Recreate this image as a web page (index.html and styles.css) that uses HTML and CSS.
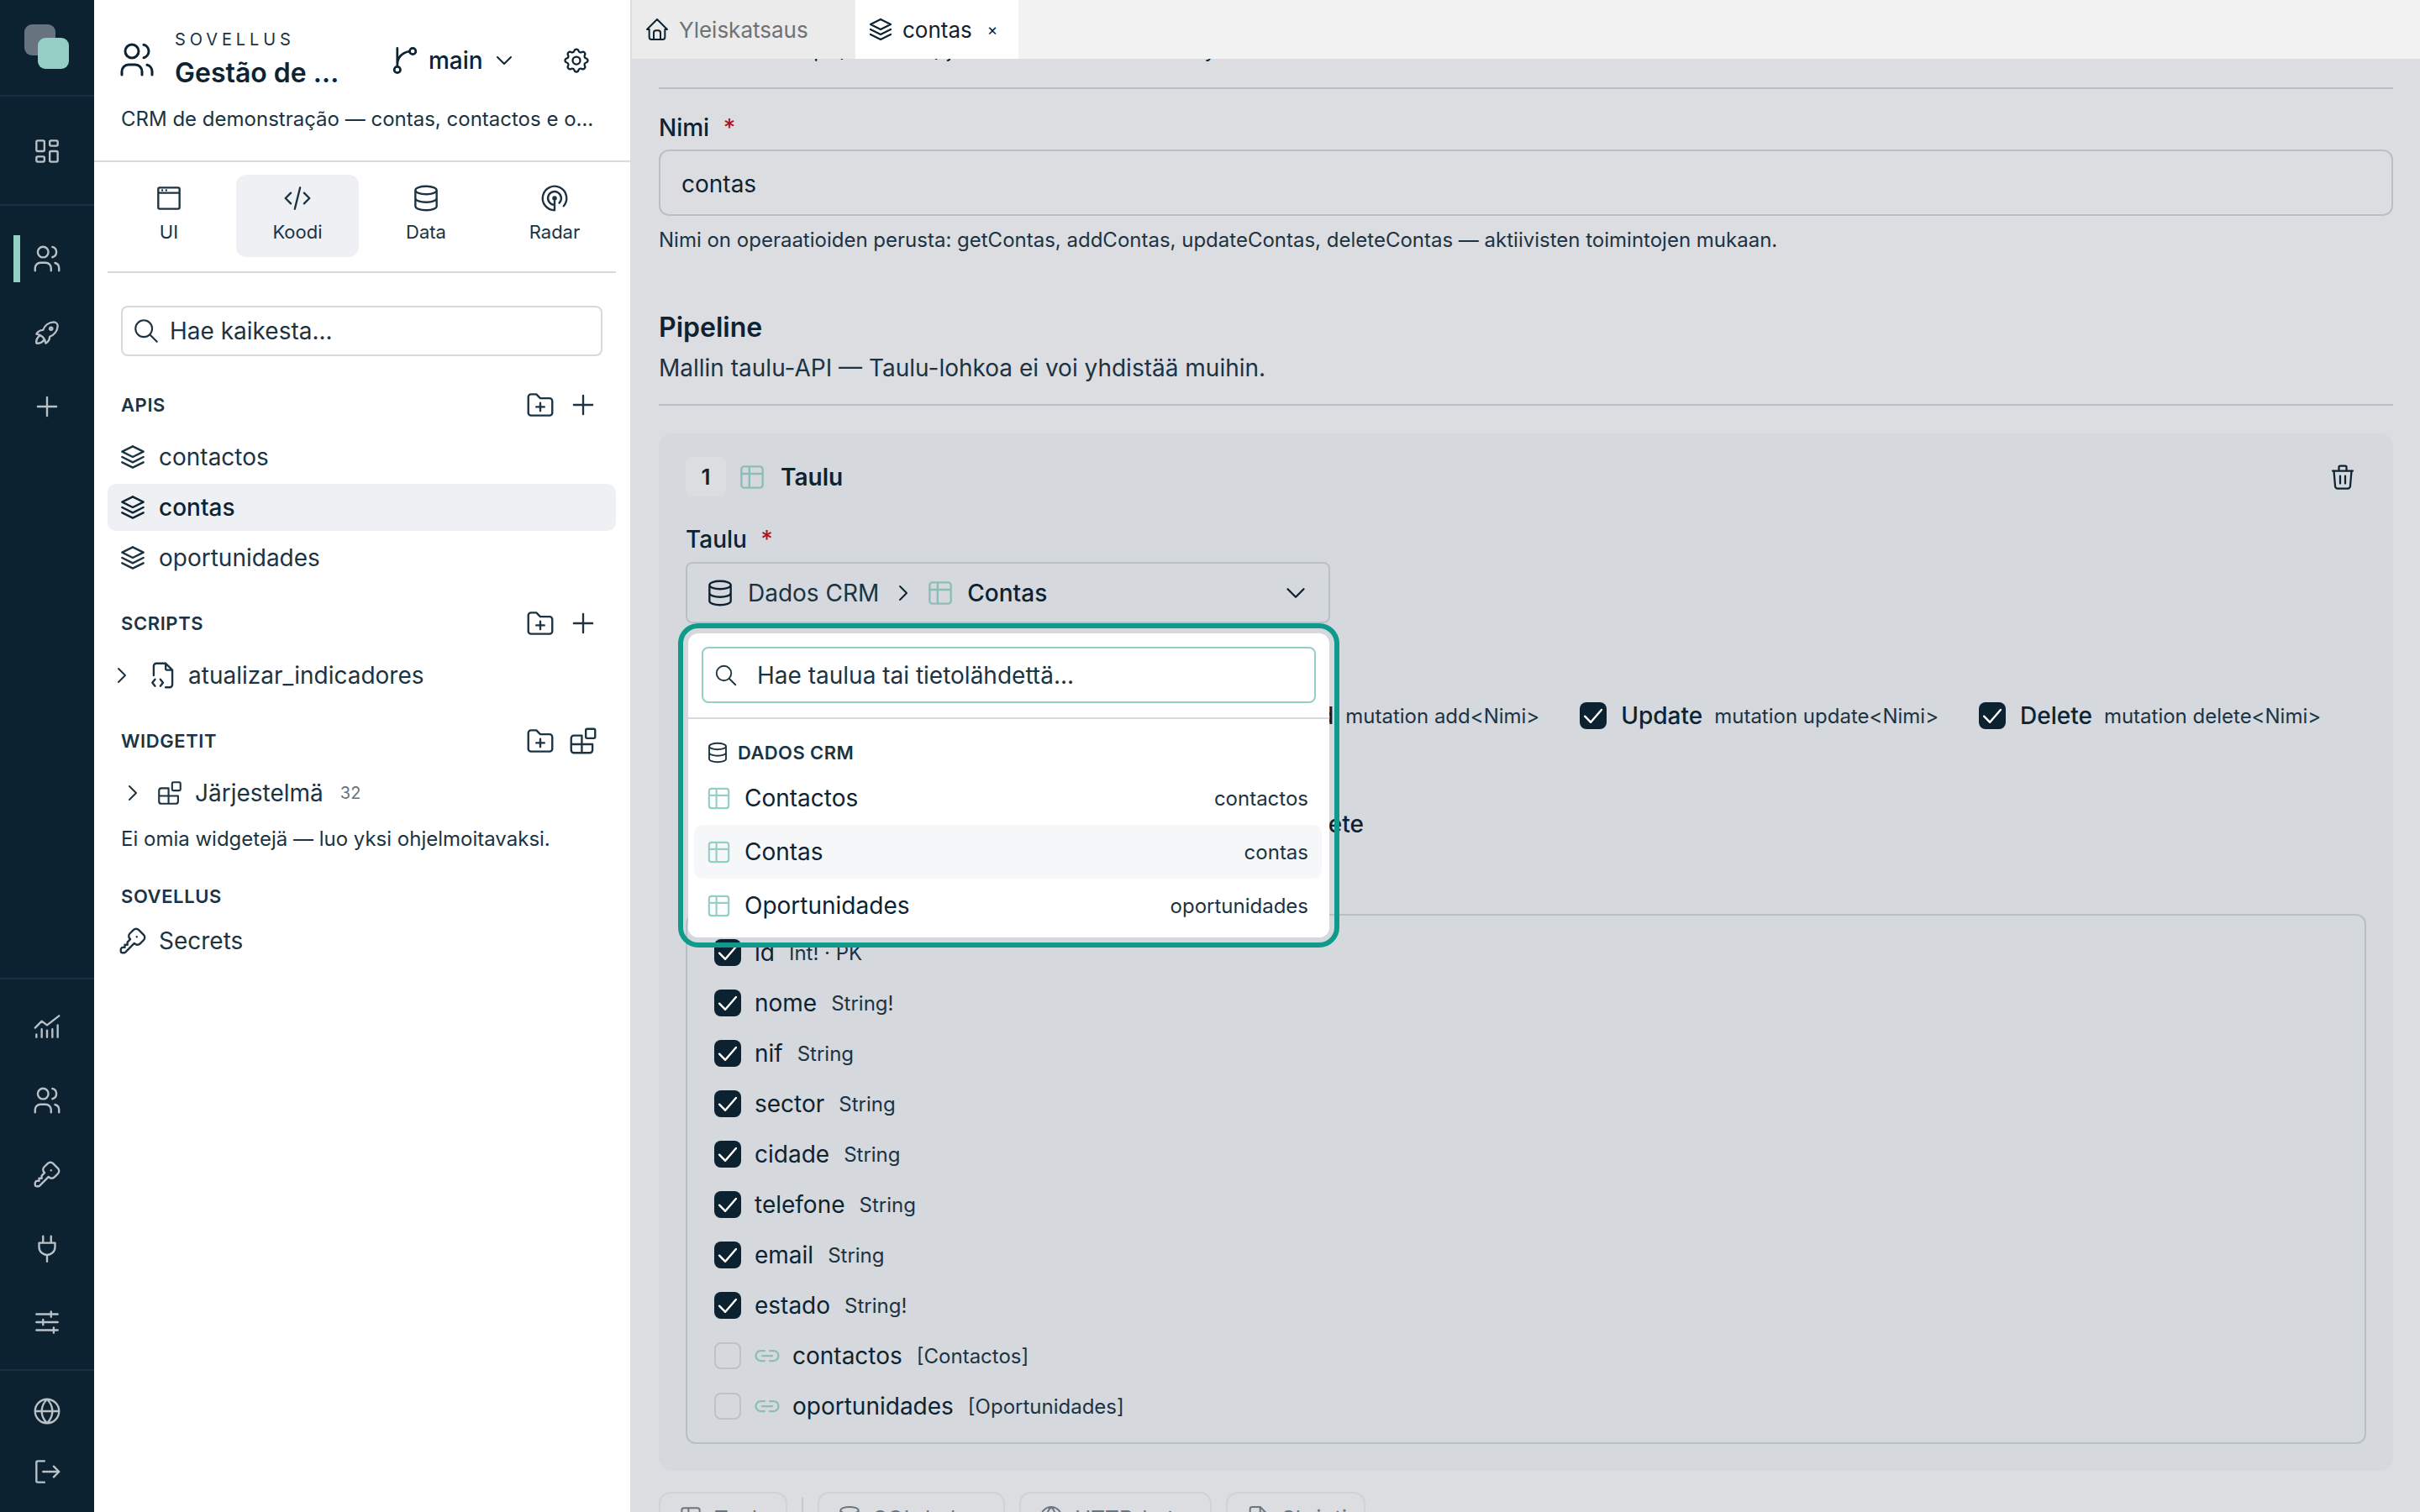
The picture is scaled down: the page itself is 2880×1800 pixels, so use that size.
FILE: index.html
```html
<!DOCTYPE html>
<html lang="fi">
<head>
    <meta charset="UTF-8">
    <title>Gestão de Clientes | contas</title>
    <link rel="stylesheet" href="styles.css">
</head>
<body>
    <svg class="sprite" xmlns="http://www.w3.org/2000/svg">
        <symbol id="i-dashboard" viewBox="0 0 24 24"><path d="M5 4h4a1 1 0 0 1 1 1v6a1 1 0 0 1-1 1H5a1 1 0 0 1-1-1V5a1 1 0 0 1 1-1M5 16h4a1 1 0 0 1 1 1v2a1 1 0 0 1-1 1H5a1 1 0 0 1-1-1v-2a1 1 0 0 1 1-1M15 12h4a1 1 0 0 1 1 1v6a1 1 0 0 1-1 1h-4a1 1 0 0 1-1-1v-6a1 1 0 0 1 1-1M15 4h4a1 1 0 0 1 1 1v2a1 1 0 0 1-1 1h-4a1 1 0 0 1-1-1V5a1 1 0 0 1 1-1"/></symbol>
        <symbol id="i-users" viewBox="0 0 24 24"><path d="M5 7a4 4 0 1 0 8 0a4 4 0 1 0-8 0M3 21v-2a4 4 0 0 1 4-4h4a4 4 0 0 1 4 4v2M16 3.13a4 4 0 0 1 0 7.75M21 21v-2a4 4 0 0 0-3-3.85"/></symbol>
        <symbol id="i-rocket" viewBox="0 0 24 24"><path d="M4 13a8 8 0 0 1 7 7a6 6 0 0 0 3-5a9 9 0 0 0 6-8a3 3 0 0 0-3-3a9 9 0 0 0-8 6a6 6 0 0 0-5 3M7 14a6 6 0 0 0-3 6a6 6 0 0 0 6-3M14 9a1 1 0 1 0 2 0a1 1 0 1 0-2 0"/></symbol>
        <symbol id="i-plus" viewBox="0 0 24 24"><path d="M12 5v14M5 12h14"/></symbol>
        <symbol id="i-chart" viewBox="0 0 24 24"><path d="M3 13l5-5 4 3 9-7M4 20v-2M8 20v-6M12 20v-5M16 20v-6M20 20v-9"/></symbol>
        <symbol id="i-key" viewBox="0 0 24 24"><path d="M16.555 3.843l3.602 3.602a2.877 2.877 0 0 1 0 4.069l-2.643 2.643a2.877 2.877 0 0 1-4.069 0l-.301-.301l-6.558 6.558a2 2 0 0 1-1.239.578l-.175.008h-1.172a1 1 0 0 1-.993-.883l-.007-.117v-1.172a2 2 0 0 1 .467-1.284l.119-.13l.414-.414h2v-2h2v-2l2.144-2.144l-.301-.301a2.877 2.877 0 0 1 0-4.069l2.643-2.643a2.877 2.877 0 0 1 4.069 0M15 9h.01"/></symbol>
        <symbol id="i-plug" viewBox="0 0 24 24"><path d="M9 3v5M15 3v5M6 8h12v3a6 6 0 0 1-12 0zM12 17v5"/></symbol>
        <symbol id="i-sliders" viewBox="0 0 24 24"><path d="M4 6h16M15 4v4M4 12h16M9 10v4M4 18h16M17 16v4"/></symbol>
        <symbol id="i-world" viewBox="0 0 24 24"><path d="M3 12a9 9 0 1 0 18 0a9 9 0 1 0-18 0M3 12h18M12 3c-3 3-4 6-4 9s1 6 4 9c3-3 4-6 4-9s-1-6-4-9"/></symbol>
        <symbol id="i-logout" viewBox="0 0 24 24"><path d="M10 4H5a1 1 0 0 0-1 1v14a1 1 0 0 0 1 1h5M9 12h12M17 8l4 4-4 4"/></symbol>
        <symbol id="i-branch" viewBox="0 0 24 24"><path d="M5 18a2 2 0 1 0 4 0a2 2 0 1 0-4 0M15 6a2 2 0 1 0 4 0a2 2 0 1 0-4 0M7 16V4M7 15c0-5 3-8 8-9"/></symbol>
        <symbol id="i-chevron-down" viewBox="0 0 24 24"><path d="M6 9l6 6 6-6"/></symbol>
        <symbol id="i-chevron-right" viewBox="0 0 24 24"><path d="M9 6l6 6-6 6"/></symbol>
        <symbol id="i-settings" viewBox="0 0 24 24"><path d="M10.325 4.317c.426-1.756 2.924-1.756 3.35 0a1.724 1.724 0 0 0 2.573 1.066c1.543-.94 3.31.826 2.37 2.37a1.724 1.724 0 0 0 1.065 2.572c1.756.426 1.756 2.924 0 3.35a1.724 1.724 0 0 0-1.066 2.573c.94 1.543-.826 3.31-2.37 2.37a1.724 1.724 0 0 0-2.572 1.065c-.426 1.756-2.924 1.756-3.35 0a1.724 1.724 0 0 0-2.573-1.066c-1.543.94-3.31-.826-2.37-2.37a1.724 1.724 0 0 0-1.065-2.572c-1.756-.426-1.756-2.924 0-3.35a1.724 1.724 0 0 0 1.066-2.573c-.94-1.543.826-3.31 2.37-2.37c1 .608 2.296.07 2.572-1.065zM9 12a3 3 0 1 0 6 0a3 3 0 0 0-6 0"/></symbol>
        <symbol id="i-browser" viewBox="0 0 24 24"><path d="M5 4h14a1 1 0 0 1 1 1v14a1 1 0 0 1-1 1H5a1 1 0 0 1-1-1V5a1 1 0 0 1 1-1M4 8h16M7 6h.01M10 6h.01"/></symbol>
        <symbol id="i-code" viewBox="0 0 24 24"><path d="M7 8l-4 4 4 4M17 8l4 4-4 4M14 4l-4 16"/></symbol>
        <symbol id="i-database" viewBox="0 0 24 24"><path d="M4 6a8 3 0 1 0 16 0a8 3 0 1 0-16 0M4 6v6a8 3 0 0 0 16 0V6M4 12v6a8 3 0 0 0 16 0v-6"/></symbol>
        <symbol id="i-radar" viewBox="0 0 24 24"><path d="M11 12a1 1 0 1 0 2 0a1 1 0 1 0-2 0M15.51 15.56a5 5 0 1 0-3.51 1.44M18.832 17.86a9 9 0 1 0-6.832 3.14M12 12v9"/></symbol>
        <symbol id="i-search" viewBox="0 0 24 24"><path d="M3 10a7 7 0 1 0 14 0a7 7 0 1 0-14 0M21 21l-6-6"/></symbol>
        <symbol id="i-folder-plus" viewBox="0 0 24 24"><path d="M12 20H5a2 2 0 0 1-2-2V6a2 2 0 0 1 2-2h4l3 3h7a2 2 0 0 1 2 2v9a2 2 0 0 1-2 2zM12 10.500v6M9 13.500h6"/></symbol>
        <symbol id="i-stack" viewBox="0 0 24 24"><path d="M12 4L4 8l8 4 8-4-8-4M4 12l8 4 8-4M4 16l8 4 8-4"/></symbol>
        <symbol id="i-file-code" viewBox="0 0 24 24"><path d="M14 3v4a1 1 0 0 0 1 1h4M5 12V5a2 2 0 0 1 2-2h7l5 5v11a2 2 0 0 1-2 2h-3M6 15l-2 2.500 2 2.500M10 15l2 2.500-2 2.500"/></symbol>
        <symbol id="i-widgets" viewBox="0 0 24 24"><path d="M5 8h6v13H5a2 2 0 0 1-2-2v-9a2 2 0 0 1 2-2M3 14.500h16M11 14.500V21h6a2 2 0 0 0 2-2v-4.500M15 3h5a1 1 0 0 1 1 1v5a1 1 0 0 1-1 1h-5a1 1 0 0 1-1-1V4a1 1 0 0 1 1-1"/></symbol>
        <symbol id="i-home" viewBox="0 0 24 24"><path d="M5 12H3l9-9 9 9h-2M5 12v7a2 2 0 0 0 2 2h10a2 2 0 0 0 2-2v-7M9 21v-6a2 2 0 0 1 2-2h2a2 2 0 0 1 2 2v6"/></symbol>
        <symbol id="i-table" viewBox="0 0 24 24"><path d="M6 4h12a2 2 0 0 1 2 2v12a2 2 0 0 1-2 2H6a2 2 0 0 1-2-2V6a2 2 0 0 1 2-2M4 9.500h16M10 4v16"/></symbol>
        <symbol id="i-link" viewBox="0 0 24 24"><path d="M8 12h8M10 8H7a4 4 0 0 0 0 8h3M14 8h3a4 4 0 0 1 0 8h-3"/></symbol>
        <symbol id="i-trash" viewBox="0 0 24 24"><path d="M4 7h16M10 11v6M14 11v6M5 7l1 12a2 2 0 0 0 2 2h8a2 2 0 0 0 2-2l1-12M9 7V4a1 1 0 0 1 1-1h4a1 1 0 0 1 1 1v3"/></symbol>
        <symbol id="i-check" viewBox="0 0 24 24"><path d="M5 12.500l5 5L19 7"/></symbol>
    </svg>

    <div class="app">
        <nav class="rail">
            <div class="rail-logo"><span class="logo-back"></span><span class="logo-front"></span></div>
            <div class="rail-group rail-home">
                <a class="rail-item"><svg class="icon"><use href="#i-dashboard"/></svg></a>
            </div>
            <div class="rail-group rail-apps">
                <a class="rail-item active"><svg class="icon"><use href="#i-users"/></svg></a>
                <a class="rail-item"><svg class="icon"><use href="#i-rocket"/></svg></a>
                <a class="rail-item"><svg class="icon"><use href="#i-plus"/></svg></a>
            </div>
            <div class="rail-group rail-admin">
                <a class="rail-item"><svg class="icon"><use href="#i-chart"/></svg></a>
                <a class="rail-item"><svg class="icon"><use href="#i-users"/></svg></a>
                <a class="rail-item"><svg class="icon"><use href="#i-key"/></svg></a>
                <a class="rail-item"><svg class="icon"><use href="#i-plug"/></svg></a>
                <a class="rail-item"><svg class="icon"><use href="#i-sliders"/></svg></a>
            </div>
            <div class="rail-group rail-bottom">
                <a class="rail-item"><svg class="icon"><use href="#i-world"/></svg></a>
                <a class="rail-item"><svg class="icon"><use href="#i-logout"/></svg></a>
            </div>
        </nav>

        <aside class="panel">
            <header class="panel-head">
                <div class="app-row">
                    <svg class="icon app-icon"><use href="#i-users"/></svg>
                    <div class="app-titles">
                        <div class="app-kicker">SOVELLUS</div>
                        <div class="app-name">Gestão de Clientes</div>
                    </div>
                    <div class="branch">
                        <svg class="icon branch-icon"><use href="#i-branch"/></svg>
                        <span>main</span>
                        <svg class="icon branch-chevron"><use href="#i-chevron-down"/></svg>
                    </div>
                    <svg class="icon gear"><use href="#i-settings"/></svg>
                </div>
                <p class="app-desc">CRM de demonstração — contas, contactos e oportunidades</p>
            </header>

            <div class="modes">
                <div class="mode"><svg class="icon"><use href="#i-browser"/></svg>UI</div>
                <div class="mode active"><svg class="icon"><use href="#i-code"/></svg>Koodi</div>
                <div class="mode"><svg class="icon"><use href="#i-database"/></svg>Data</div>
                <div class="mode"><svg class="icon"><use href="#i-radar"/></svg>Radar</div>
            </div>

            <div class="panel-search">
                <svg class="icon"><use href="#i-search"/></svg>
                <span>Hae kaikesta...</span>
            </div>

            <section class="tree-section">
                <div class="section-head">
                    <span>APIS</span>
                    <div class="section-actions">
                        <svg class="icon"><use href="#i-folder-plus"/></svg>
                        <svg class="icon"><use href="#i-plus"/></svg>
                    </div>
                </div>
                <div class="tree-row"><svg class="icon"><use href="#i-stack"/></svg>contactos</div>
                <div class="tree-row active"><svg class="icon"><use href="#i-stack"/></svg>contas</div>
                <div class="tree-row"><svg class="icon"><use href="#i-stack"/></svg>oportunidades</div>
            </section>

            <section class="tree-section">
                <div class="section-head">
                    <span>SCRIPTS</span>
                    <div class="section-actions">
                        <svg class="icon"><use href="#i-folder-plus"/></svg>
                        <svg class="icon"><use href="#i-plus"/></svg>
                    </div>
                </div>
                <div class="tree-row nested">
                    <svg class="icon chevron"><use href="#i-chevron-right"/></svg>
                    <svg class="icon"><use href="#i-file-code"/></svg>atualizar_indicadores
                </div>
            </section>

            <section class="tree-section">
                <div class="section-head">
                    <span>WIDGETIT</span>
                    <div class="section-actions">
                        <svg class="icon"><use href="#i-folder-plus"/></svg>
                        <svg class="icon"><use href="#i-widgets"/></svg>
                    </div>
                </div>
                <div class="tree-row nested widgets">
                    <svg class="icon chevron"><use href="#i-chevron-right"/></svg>
                    <svg class="icon"><use href="#i-widgets"/></svg>Järjestelmä<span class="count">32</span>
                </div>
                <p class="tree-note">Ei omia widgetejä — luo yksi ohjelmoitavaksi.</p>
            </section>

            <section class="tree-section app-section">
                <div class="section-head"><span>SOVELLUS</span></div>
                <div class="tree-row"><svg class="icon"><use href="#i-key"/></svg>Secrets</div>
            </section>
        </aside>

        <main class="main">
            <div class="tabs">
                <div class="tab"><svg class="icon"><use href="#i-home"/></svg>Yleiskatsaus</div>
                <div class="tab active"><svg class="icon"><use href="#i-stack"/></svg>contas<span class="tab-close">×</span></div>
            </div>

            <div class="content">
                <p class="intro">Automaattinen api (mallitaulu) ja tietolähde vain tässä näkymässä.</p>
                <hr class="rule rule-top">

                <label class="field-label nimi-label">Nimi <b>*</b></label>
                <div class="text-input">contas</div>
                <p class="help">Nimi on operaatioiden perusta: getContas, addContas, updateContas, deleteContas — aktiivisten toimintojen mukaan.</p>

                <h2 class="pipeline-title">Pipeline</h2>
                <p class="pipeline-sub">Mallin taulu-API — Taulu-lohkoa ei voi yhdistää muihin.</p>
                <hr class="rule rule-pipeline">

                <section class="block">
                    <div class="block-head">
                        <span class="step">1</span>
                        <svg class="icon table-icon"><use href="#i-table"/></svg>
                        <span class="block-title">Taulu</span>
                        <svg class="icon trash"><use href="#i-trash"/></svg>
                    </div>

                    <label class="field-label taulu-label">Taulu <b>*</b></label>
                    <div class="select-wrap">
                        <div class="select">
                            <svg class="icon"><use href="#i-database"/></svg>
                            <span class="select-source">Dados CRM</span>
                            <svg class="icon select-sep"><use href="#i-chevron-right"/></svg>
                            <svg class="icon table-icon"><use href="#i-table"/></svg>
                            <span class="select-value">Contas</span>
                            <svg class="icon select-chevron"><use href="#i-chevron-down"/></svg>
                        </div>

                        <div class="picker">
                            <div class="picker-top">
                                <div class="picker-search">
                                    <svg class="icon"><use href="#i-search"/></svg>
                                    <span>Hae taulua tai tietolähdettä...</span>
                                </div>
                            </div>
                            <div class="picker-group"><svg class="icon"><use href="#i-database"/></svg>DADOS CRM</div>
                            <div class="picker-row"><svg class="icon"><use href="#i-table"/></svg><span class="picker-name">Contactos</span><span class="picker-id">contactos</span></div>
                            <div class="picker-row active"><svg class="icon"><use href="#i-table"/></svg><span class="picker-name">Contas</span><span class="picker-id">contas</span></div>
                            <div class="picker-row"><svg class="icon"><use href="#i-table"/></svg><span class="picker-name">Oportunidades</span><span class="picker-id">oportunidades</span></div>
                        </div>
                    </div>

                    <div class="ops">
                        <div class="op op-read"><span class="box on"><svg class="icon"><use href="#i-check"/></svg></span><span class="op-name">Read</span><span class="op-sig">query get&lt;Nimi&gt;</span></div>
                        <div class="op"><span class="box on"><svg class="icon"><use href="#i-check"/></svg></span><span class="op-name">Add</span><span class="op-sig">mutation add&lt;Nimi&gt;</span></div>
                        <div class="op"><span class="box on"><svg class="icon"><use href="#i-check"/></svg></span><span class="op-name">Update</span><span class="op-sig">mutation update&lt;Nimi&gt;</span></div>
                        <div class="op"><span class="box on"><svg class="icon"><use href="#i-check"/></svg></span><span class="op-name">Delete</span><span class="op-sig">mutation delete&lt;Nimi&gt;</span></div>
                    </div>

                    <div class="soft-delete">Käytä pehmeää poistoa: Soft delete</div>

                    <div class="fields">
                        <div class="field-row"><span class="box on"><svg class="icon"><use href="#i-check"/></svg></span><span class="field-name">id</span><span class="field-type">Int! · PK</span></div>
                        <div class="field-row"><span class="box on"><svg class="icon"><use href="#i-check"/></svg></span><span class="field-name">nome</span><span class="field-type">String!</span></div>
                        <div class="field-row"><span class="box on"><svg class="icon"><use href="#i-check"/></svg></span><span class="field-name">nif</span><span class="field-type">String</span></div>
                        <div class="field-row"><span class="box on"><svg class="icon"><use href="#i-check"/></svg></span><span class="field-name">sector</span><span class="field-type">String</span></div>
                        <div class="field-row"><span class="box on"><svg class="icon"><use href="#i-check"/></svg></span><span class="field-name">cidade</span><span class="field-type">String</span></div>
                        <div class="field-row"><span class="box on"><svg class="icon"><use href="#i-check"/></svg></span><span class="field-name">telefone</span><span class="field-type">String</span></div>
                        <div class="field-row"><span class="box on"><svg class="icon"><use href="#i-check"/></svg></span><span class="field-name">email</span><span class="field-type">String</span></div>
                        <div class="field-row"><span class="box on"><svg class="icon"><use href="#i-check"/></svg></span><span class="field-name">estado</span><span class="field-type">String!</span></div>
                        <div class="field-row"><span class="box"></span><svg class="icon link-icon"><use href="#i-link"/></svg><span class="field-name">contactos</span><span class="field-type">[Contactos]</span></div>
                        <div class="field-row"><span class="box"></span><svg class="icon link-icon"><use href="#i-link"/></svg><span class="field-name">oportunidades</span><span class="field-type">[Oportunidades]</span></div>
                    </div>
                </section>

                <div class="add-blocks">
                    <button class="add-btn btn-table"><svg class="icon"><use href="#i-table"/></svg>Taulu</button>
                    <span class="add-sep"></span>
                    <button class="add-btn btn-sql"><svg class="icon"><use href="#i-database"/></svg>SQL-haku</button>
                    <button class="add-btn btn-http"><svg class="icon"><use href="#i-world"/></svg>HTTP-kutsu</button>
                    <button class="add-btn btn-script"><svg class="icon"><use href="#i-file-code"/></svg>Skripti</button>
                </div>
            </div>
        </main>
    </div>
</body>
</html>
```

FILE: styles.css
```css
* {
    margin: 0;
    padding: 0;
    box-sizing: border-box;
}

body {
    font-family: 'Inter', 'Liberation Sans', sans-serif;
    color: #0d2331;
    background: #dcdde1;
}

.sprite {
    display: none;
}

.icon {
    width: 38px;
    height: 38px;
    flex: none;
    fill: none;
    stroke: currentColor;
    stroke-width: 1.5;
    stroke-linecap: round;
    stroke-linejoin: round;
}

.app {
    display: flex;
    height: 1800px;
    overflow: hidden;
}

/* rail */
.rail {
    width: 112px;
    flex: none;
    display: flex;
    flex-direction: column;
    background: #0c2230;
    color: #b9c1c6;
}

.rail-logo {
    position: relative;
    height: 113px;
}

.logo-back,
.logo-front {
    position: absolute;
    width: 37px;
    height: 37px;
    border-radius: 9px;
}

.logo-back {
    left: 29px;
    top: 29px;
    background: #67747d;
}

.logo-front {
    left: 45px;
    top: 45px;
    background: #94cfc6;
}

.rail-group {
    border-top: 2px solid #163141;
}

.rail-home {
    height: 130px;
    padding-top: 21px;
}

.rail-apps {
    height: 921px;
    padding-top: 19px;
}

.rail-admin {
    height: 466px;
    padding-top: 12px;
}

.rail-bottom {
    padding-top: 12px;
}

.rail-item {
    position: relative;
    display: flex;
    align-items: center;
    justify-content: center;
    height: 88px;
}

.rail-bottom .rail-item {
    height: 72px;
}

.rail-item.active::before {
    content: "";
    position: absolute;
    left: 16px;
    top: 16px;
    width: 8px;
    height: 56px;
    background: #94cfc6;
}

/* panel */
.panel {
    width: 638px;
    flex: none;
    background: #fff;
    color: #1b3342;
    padding: 0 17px 0 16px;
}

.panel-head {
    height: 193px;
    margin: 0 -17px 0 -16px;
    padding: 33px 0 0 27px;
    border-bottom: 2px solid #d6dade;
}

.app-row {
    display: flex;
    align-items: center;
}

.app-icon {
    width: 48px;
    height: 48px;
    color: #0d2331;
    margin-right: 21px;
}

.app-titles {
    width: 196px;
}

.app-kicker {
    font-size: 20px;
    line-height: 28px;
    letter-spacing: 4.9px;
    color: #1b3342;
}

.app-name {
    margin-top: 4px;
    font-size: 32px;
    line-height: 44px;
    font-weight: 600;
    color: #0d2331;
    white-space: nowrap;
    overflow: hidden;
    text-overflow: ellipsis;
}

.branch {
    display: flex;
    align-items: center;
    margin: 2px 0 0 56px;
    font-size: 28px;
    font-weight: 500;
    color: #0d2331;
}

.branch-icon {
    width: 44px;
    height: 44px;
    margin-right: 6px;
}

.branch-chevron {
    width: 32px;
    height: 32px;
    margin-left: 9px;
}

.gear {
    width: 36px;
    height: 36px;
    margin: 2px 0 0 52px;
    color: #0d2331;
}

.app-desc {
    width: 563px;
    margin: 15px 0 0 5px;
    font-size: 24px;
    line-height: 36px;
    white-space: nowrap;
    overflow: hidden;
    text-overflow: ellipsis;
}

.modes {
    display: grid;
    grid-template-columns: repeat(4, 146px);
    gap: 7px;
    margin-top: 15px;
    padding-bottom: 17px;
    border-bottom: 2px solid #d6dade;
}

.mode {
    display: flex;
    flex-direction: column;
    align-items: center;
    height: 98px;
    padding-top: 9px;
    border-radius: 12px;
    font-size: 22px;
    line-height: 36px;
}

.mode .icon {
    margin-bottom: 3px;
}

.mode.active {
    background: #eff0f4;
}

.panel-search {
    display: flex;
    align-items: center;
    gap: 11px;
    height: 60px;
    margin: 39px 16px 0;
    padding-left: 11px;
    border: 2px solid #d6dade;
    border-radius: 8px;
    font-size: 28px;
}

.panel-search .icon {
    width: 34px;
    height: 34px;
}

.section-head {
    display: flex;
    align-items: center;
    justify-content: space-between;
    height: 40px;
    padding: 0 20px 0 16px;
    font-size: 22px;
    font-weight: 600;
    letter-spacing: .6px;
    margin-bottom: 14px;
}

.section-actions {
    display: flex;
    gap: 13px;
    color: #1b3342;
}

.tree-section {
    margin-top: 30px;
}

.panel-search + .tree-section {
    margin-top: 38px;
}

.tree-row {
    display: flex;
    align-items: center;
    gap: 12px;
    height: 56px;
    margin-bottom: 4px;
    padding-left: 11px;
    border-radius: 10px;
    font-size: 28px;
}

.tree-row.active {
    background: #eff0f4;
    color: #0d2331;
    font-weight: 500;
}

.tree-row.nested {
    padding-left: 1px;
    gap: 11px;
}

.tree-row .chevron {
    width: 32px;
    height: 32px;
    margin-right: 3px;
}

.tree-row.widgets {
    padding-left: 14px;
    gap: 13px;
}

.tree-row.widgets .chevron {
    margin-right: -2px;
}

.tree-row.widgets .icon:not(.chevron) {
    width: 34px;
    height: 34px;
}

.count {
    margin-left: 7px;
    font-size: 20px;
    color: #67747d;
}

.tree-note {
    margin-top: 11px;
    padding-left: 16px;
    font-size: 24px;
    line-height: 32px;
}

.app-section {
    margin-top: 32px;
}

.app-section .section-head {
    margin-bottom: 5px;
}

/* main */
.main {
    flex: 1;
    min-width: 0;
    display: flex;
    flex-direction: column;
    padding-left: 2px;
}

.tabs {
    display: flex;
    height: 70px;
    flex: none;
    background: #f2f2f2;
    font-size: 26px;
}

.tab {
    display: flex;
    align-items: center;
    gap: 10px;
    width: 266px;
    padding-left: 14px;
    background: #ebebeb;
    color: #6f7275;
}

.tab .icon {
    width: 32px;
    height: 32px;
    color: #0d2331;
}

.tab.active {
    width: 194px;
    gap: 8px;
    padding-left: 12px;
    background: #fff;
    color: #0d2331;
}

.tab.active .icon {
    width: 36px;
    height: 36px;
}

.tab-close {
    margin-left: 10px;
    font-size: 19px;
}

.content {
    flex: 1;
    min-height: 0;
    overflow: hidden;
    padding: 0 32px;
}

.intro {
    margin-top: -26px;
    font-size: 24px;
    line-height: 32px;
    white-space: nowrap;
}

.rule {
    border: none;
    height: 2px;
    background: #b8bfc6;
}

.rule-top {
    margin-top: 28px;
}

.rule-pipeline {
    margin-top: 25px;
}

.field-label {
    display: block;
    font-size: 28px;
    font-weight: 500;
    line-height: 36px;
}

.field-label b {
    margin-left: 9px;
    color: #a9161b;
    font-weight: 500;
}

.nimi-label {
    margin-top: 28px;
}

.text-input {
    display: flex;
    align-items: center;
    height: 79px;
    margin-top: 8px;
    padding: 3px 0 0 25px;
    border: 2px solid #b8bfc6;
    border-radius: 12px;
    font-size: 28px;
}

.help {
    margin-top: 13px;
    font-size: 24px;
    line-height: 32px;
    color: #1b3342;
}

.pipeline-title {
    margin-top: 68px;
    font-size: 32px;
    line-height: 40px;
    font-weight: 600;
}

.pipeline-sub {
    margin-top: 10px;
    font-size: 28px;
    line-height: 36px;
    color: #1b3342;
}

.block {
    height: 1235px;
    margin-top: 33px;
    padding: 28px 32px 32px;
    border-radius: 16px;
    background: #d5d8dd;
}

.block-head {
    display: flex;
    align-items: center;
    height: 47px;
}

.step {
    display: flex;
    align-items: center;
    justify-content: center;
    width: 48px;
    height: 47px;
    border-radius: 8px;
    background: #dcdde1;
    font-size: 26px;
    font-weight: 600;
}

.table-icon {
    color: #8dbdb6;
}

.block-head .table-icon {
    margin-left: 12px;
}

.block-title {
    margin-left: 15px;
    font-size: 28px;
    font-weight: 600;
}

.trash {
    width: 36px;
    height: 36px;
    margin-left: auto;
    margin-right: 10px;
}

.taulu-label {
    margin-top: 33px;
}

.select-wrap {
    position: relative;
    width: 767px;
    margin-top: 9px;
}

.select {
    display: flex;
    align-items: center;
    height: 73px;
    padding-left: 20px;
    border: 2px solid #b8bfc6;
    border-radius: 8px;
    font-size: 28px;
}

.select-source {
    margin-left: 14px;
    color: #1b3342;
}

.select-sep {
    width: 32px;
    height: 32px;
    margin-left: 13px;
}

.select .table-icon {
    margin-left: 9px;
}

.select-value {
    margin-left: 13px;
    font-weight: 500;
}

.select-chevron {
    margin-left: auto;
    margin-right: 20px;
}

/* table picker, open over the form */
.picker {
    position: absolute;
    left: 3px;
    top: 85px;
    width: 763px;
    height: 362px;
    background: #fff;
    border-radius: 12px;
    outline: 6px solid #0f9a8c;
    outline-offset: 6px;
}

.picker-top {
    height: 102px;
    padding: 16px 16px 0;
    border-bottom: 2px solid #d6dade;
}

.picker-search {
    display: flex;
    align-items: center;
    gap: 22px;
    height: 67px;
    padding-left: 12px;
    border: 2px solid #94cfc6;
    border-radius: 8px;
    font-size: 28px;
    color: #1b3342;
}

.picker-search .icon {
    width: 30px;
    height: 30px;
}

.picker-group {
    display: flex;
    align-items: center;
    gap: 9px;
    height: 40px;
    margin-top: 20px;
    padding-left: 20px;
    font-size: 22px;
    font-weight: 600;
    letter-spacing: .4px;
    color: #1b3342;
}

.picker-group .icon {
    width: 30px;
    height: 30px;
}

.picker-row {
    display: flex;
    align-items: center;
    gap: 13px;
    height: 64px;
    padding: 0 16px 0 12px;
    margin: 0 9px 0 7px;
    border-radius: 10px;
    font-size: 28px;
}

.picker-group + .picker-row {
    margin-top: 2px;
}

.picker-row .icon {
    width: 35px;
    height: 35px;
    color: #94cfc6;
}

.picker-row.active {
    background: #f6f7f9;
}

.picker-name {
    flex: 1;
}

.picker-id {
    font-size: 24px;
    color: #1b3342;
}

.ops {
    display: flex;
    gap: 48px;
    margin-top: 94px;
    white-space: nowrap;
}

.op {
    display: flex;
    align-items: center;
    height: 32px;
}

.op-read {
    width: 620px;
    padding-left: 24px;
}

.op-name {
    margin-left: 17px;
    font-size: 28px;
    font-weight: 500;
}

.op-sig {
    margin-left: 14px;
    font-size: 24px;
    color: #1b3342;
}

.box {
    display: flex;
    align-items: center;
    justify-content: center;
    width: 32px;
    height: 32px;
    flex: none;
    border: 2px solid #bcc2c8;
    border-radius: 8px;
    color: #fff;
}

.box.on {
    border: none;
    background: #0c2230;
}

.box .icon {
    width: 34px;
    height: 34px;
    stroke-width: 1.7;
}

.soft-delete {
    width: 807px;
    margin-top: 97px;
    font-size: 28px;
    line-height: 32px;
    font-weight: 500;
    text-align: right;
}

.fields {
    height: 631px;
    margin-top: 91px;
    padding: 14px 32px;
    border: 2px solid #b8bfc6;
    border-radius: 12px;
}

.field-row {
    display: flex;
    align-items: center;
    height: 60px;
}

.field-name {
    margin-left: 16px;
    font-size: 28px;
}

.field-type {
    margin-left: 17px;
    font-size: 24px;
    color: #1b3342;
}

.link-icon {
    width: 36px;
    height: 36px;
    margin-left: 13px;
    color: #8dbdb6;
}

.link-icon + .field-name {
    margin-left: 12px;
}

.add-blocks {
    display: flex;
    align-items: flex-start;
    margin-top: 25px;
}

.add-btn {
    display: flex;
    align-items: flex-start;
    gap: 12px;
    height: 70px;
    padding: 15px 0 0 20px;
    border: 2px solid #cfd2d6;
    border-radius: 14px;
    background: none;
    font-family: inherit;
    font-size: 26px;
    line-height: 30px;
    color: #6b7680;
}

.add-btn .icon {
    width: 32px;
    height: 32px;
    margin-top: -3px;
}

.btn-table {
    width: 153px;
}

.add-sep {
    width: 2px;
    height: 60px;
    margin: 7px 17px 0;
    background: #c3c8cd;
}

.btn-sql {
    width: 223px;
}

.btn-http {
    width: 229px;
    margin-left: 17px;
}

.btn-script {
    width: 166px;
    margin-left: 17px;
}
```
